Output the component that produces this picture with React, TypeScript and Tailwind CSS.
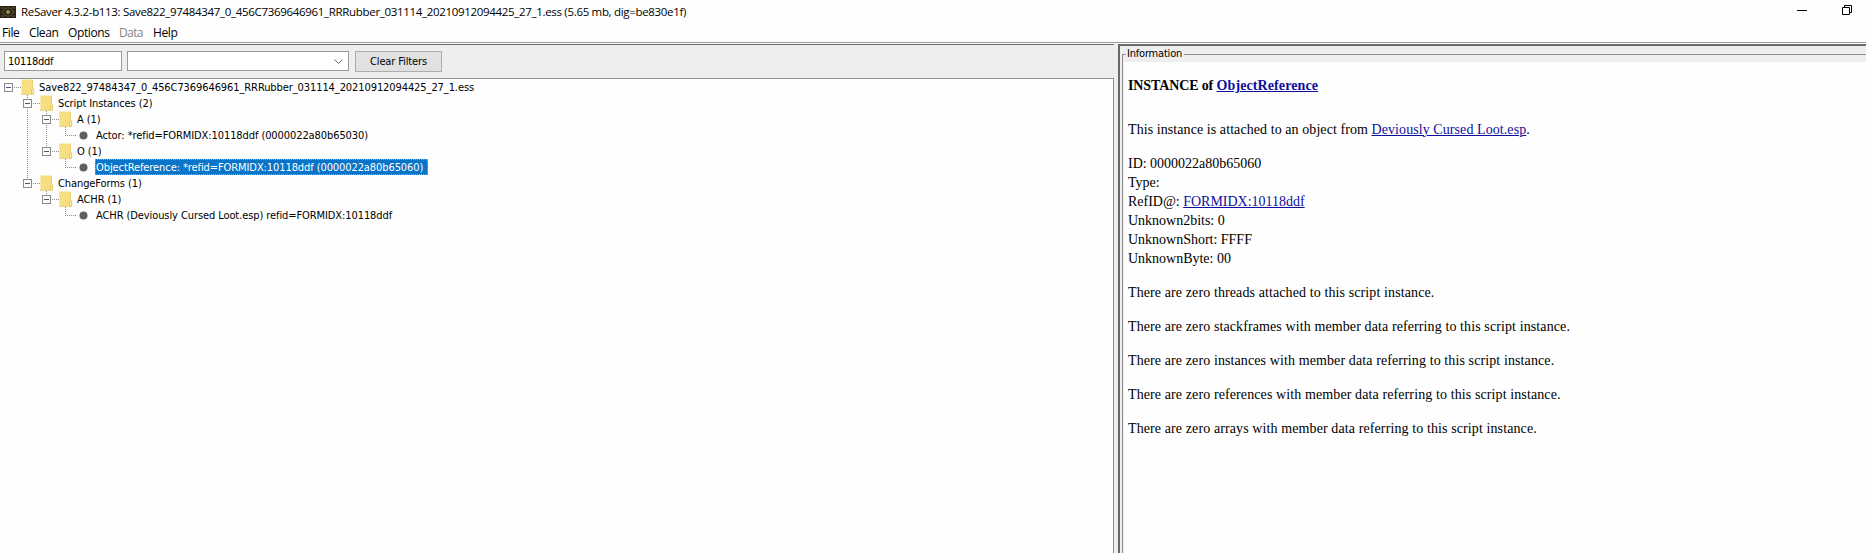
type Guide = "line" | "blank";

interface TreeRow {
  guides: Guide[];
  kind: "folder" | "leaf";
  label: string;
  continues?: boolean;
  root?: boolean;
  selected?: boolean;
}

const rows: TreeRow[] = [
  { guides: [], kind: "folder", root: true, label: "Save822_97484347_0_456C7369646961_RRRubber_031114_20210912094425_27_1.ess" },
  { guides: ["blank"], kind: "folder", continues: true, label: "Script Instances (2)" },
  { guides: ["blank", "line"], kind: "folder", continues: true, label: "A (1)" },
  { guides: ["blank", "line", "line"], kind: "leaf", label: "Actor: *refid=FORMIDX:10118ddf (0000022a80b65030)" },
  { guides: ["blank", "line"], kind: "folder", label: "O (1)" },
  { guides: ["blank", "line", "blank"], kind: "leaf", selected: true, label: "ObjectReference: *refid=FORMIDX:10118ddf (0000022a80b65060)" },
  { guides: ["blank"], kind: "folder", label: "ChangeForms (1)" },
  { guides: ["blank", "blank"], kind: "folder", label: "ACHR (1)" },
  { guides: ["blank", "blank", "blank"], kind: "leaf", label: "ACHR (Deviously Cursed Loot.esp) refid=FORMIDX:10118ddf" },
];

const subjects = [
  "threads attached to",
  "stackframes with member data referring to",
  "instances with member data referring to",
  "references with member data referring to",
  "arrays with member data referring to",
];

const dots = { stroke: "#8c8c8c", strokeWidth: 1, strokeDasharray: "1 1" };

function GuideCell({ kind }: { kind: Guide }) {
  return (
    <svg width="19" height="16" className="shrink-0">
      {kind === "line" && <line x1="4.5" y1="0" x2="4.5" y2="16" {...dots} />}
    </svg>
  );
}

function FolderCell({ root, continues }: { root?: boolean; continues?: boolean }) {
  return (
    <svg width="34" height="16" className="shrink-0">
      {!root && <line x1="4.5" y1="0" x2="4.5" y2="4" {...dots} />}
      {continues && <line x1="4.5" y1="12" x2="4.5" y2="16" {...dots} />}
      <line x1="10" y1="8.5" x2="17" y2="8.5" {...dots} />
      <rect x="0.5" y="4.5" width="8" height="8" fill="#fbfbfb" stroke="#8b8b8b" />
      <path d="M2 8.5h5" stroke="#4a5580" />
      <path d="M17 0.5h11.5v9H30V15.500H17z" fill="#f7de83" />
      <path d="M17.5 1v14" stroke="#fbeaa8" />
      <path d="M27.500 9.5H30V15H27.500z" fill="#fae9a4" />
      <path d="M27.500 15V10.500L28.500 9.5V1M29.700 9.5V15" stroke="#dfbd55" strokeWidth="0.7" fill="none" />
      <path d="M17 15.300H30" stroke="#e6c765" strokeWidth="0.7" />
    </svg>
  );
}

function LeafCell() {
  return (
    <svg width="34" height="16" className="shrink-0">
      <line x1="4.5" y1="0" x2="4.5" y2="8" {...dots} />
      <line x1="4" y1="8.5" x2="15" y2="8.5" {...dots} />
      <circle cx="22.5" cy="8.5" r="4" fill="#5e5e5e" />
    </svg>
  );
}

function Row({ row }: { row: TreeRow }) {
  return (
    <div className="flex h-4 items-center">
      {row.guides.map((kind, i) => (
        <GuideCell key={i} kind={kind} />
      ))}
      {row.kind === "folder" ? <FolderCell root={row.root} continues={row.continues} /> : <LeafCell />}
      {row.selected ? (
        <span className="h-4 border border-dotted border-[#d09a68] bg-[#0a74c8] pr-[4px] leading-4 text-white">{row.label}</span>
      ) : (
        <span className="h-4 pl-px leading-[18px]">{row.label}</span>
      )}
    </div>
  );
}

function TreeView() {
  return (
    <div className="min-h-0 flex-1 border-t border-r border-[#8f8f8f] bg-[#fefefe] pl-1 tracking-[-0.09px] whitespace-pre">
      {rows.map((row) => (
        <Row key={row.label} row={row} />
      ))}
    </div>
  );
}

function Link({ children }: { children: string }) {
  return <a className="text-[#0e0e9c] underline decoration-1 underline-offset-1">{children}</a>;
}

function TitleBar() {
  return (
    <header className="flex h-6 items-center">
      <svg width="16" height="12" className="shrink-0">
        <rect width="16" height="12" fill="#2c2415" />
        <ellipse cx="8" cy="6" rx="5" ry="4" fill="none" stroke="#7a6a3e" strokeDasharray="2 1" />
        <path d="M1 2h3M12 2h3M1 10h3M12 10h3M1 6h2M13 6h2" stroke="#5d5130" />
        <circle cx="8" cy="6" r="2" fill="#a08c50" />
      </svg>
      <h1 className="ml-[5px] flex-1 font-['Open_Sans',sans-serif] text-[11.5px] leading-6 tracking-[-0.32px] whitespace-pre">
        ReSaver 4.3.2-b113: Save822_97484347_0_456C7369646961_RRRubber_031114_20210912094425_27_1.ess (5.65 mb, dig=be830e1f)
      </h1>
      <svg width="70" height="24" className="shrink-0" fill="none" stroke="#000">
        <path d="M1 10.5h10" />
        <path d="M46.5 7.5h7v7h-7zM48.5 7.5v-2h7v7h-2" />
      </svg>
    </header>
  );
}

function MenuBar() {
  return (
    <nav className="flex h-[18px] pl-[2px] font-['Open_Sans',sans-serif] text-xs leading-[18px] tracking-[-0.4px]">
      <span className="w-[27px]">File</span>
      <span className="w-[39px]">Clean</span>
      <span className="w-[51px]">Options</span>
      <span className="w-[34px] tracking-[-0.6px] text-[#858585]">Data</span>
      <span>Help</span>
    </nav>
  );
}

function FilterBar() {
  return (
    <div className="flex h-[33px] shrink-0 items-start bg-[#eeeeee] pt-[6px] pl-1">
      <div className="h-5 w-[118px] border border-[#9a9a9a] bg-white pl-[3px] leading-[19px] tracking-[-0.3px]">10118ddf</div>
      <div className="ml-[5px] flex h-5 w-[222px] items-center justify-end border border-[#9a9a9a] bg-white pt-[2px] pr-[5px]">
        <svg width="9" height="6" fill="none" stroke="#666">
          <path d="M0.500 0.500L4.500 4.500L8.500 0.500" />
        </svg>
      </div>
      <div className="ml-[6px] h-[21px] w-[87px] border border-[#adadad] bg-[#e1e1e1] text-center leading-[19px] tracking-[-0.12px]">
        Clear Filters
      </div>
    </div>
  );
}

function Information() {
  return (
    <section className="flex flex-1 flex-col border-t-2 border-l-2 border-[#69696d] bg-[#eeeeee] pl-[2px]">
      <div className="flex h-4 items-center">
        <span className="h-2 w-1 self-end border-t border-l border-[#8f8f8f]" />
        <span className="mr-[2px] ml-px leading-4 tracking-[-0.2px]">Information</span>
        <span className="mt-px h-px flex-1 bg-[#8f8f8f]" />
      </div>
      <div className="flex flex-1 flex-col border-l border-[#8f8f8f]">
        <div className="ml-px flex-1 bg-[#fefefe] pt-[14px] pl-1 font-['Liberation_Serif',serif] text-sm leading-[19px] tracking-[0.075px] whitespace-pre">
          <h2 className="font-bold tracking-[-0.02px]">
            <span className="tracking-[-0.12px]">INSTANCE of </span>
            <span className="tracking-[0.1px]">
              <Link>ObjectReference</Link>
            </span>
          </h2>
          <p className="mt-[25px]">
            This instance is attached to an object from <Link>Deviously Cursed Loot.esp</Link>.
          </p>
          <div className="mt-[15px] tracking-[-0.01px]">
            <p>ID: 0000022a80b65060</p>
            <p>Type:</p>
            <p>
              RefID@: <Link>FORMIDX:10118ddf</Link>
            </p>
            <p>Unknown2bits: 0</p>
            <p>UnknownShort: FFFF</p>
            <p>UnknownByte: 00</p>
          </div>
          <div className="mt-[15px] flex flex-col gap-[15px] tracking-[0.105px]">
            {subjects.map((subject) => (
              <p key={subject}>There are zero {subject} this script instance.</p>
            ))}
          </div>
        </div>
      </div>
    </section>
  );
}

export default function App() {
  return (
    <div className="flex h-[553px] w-full flex-col overflow-hidden bg-[#fefefe] font-['DejaVu_Sans_Condensed',sans-serif] text-[11px] text-black">
      <TitleBar />
      <MenuBar />
      <div className="flex min-h-0 flex-1 border-t border-[#9a9a9a]">
        <div className="mt-px flex w-[1114px] flex-col border-t border-[#69696d]">
          <FilterBar />
          <TreeView />
        </div>
        <div className="w-1 bg-[#eeeeee]" />
        <div className="flex flex-1 pt-px">
          <Information />
        </div>
      </div>
    </div>
  );
}
